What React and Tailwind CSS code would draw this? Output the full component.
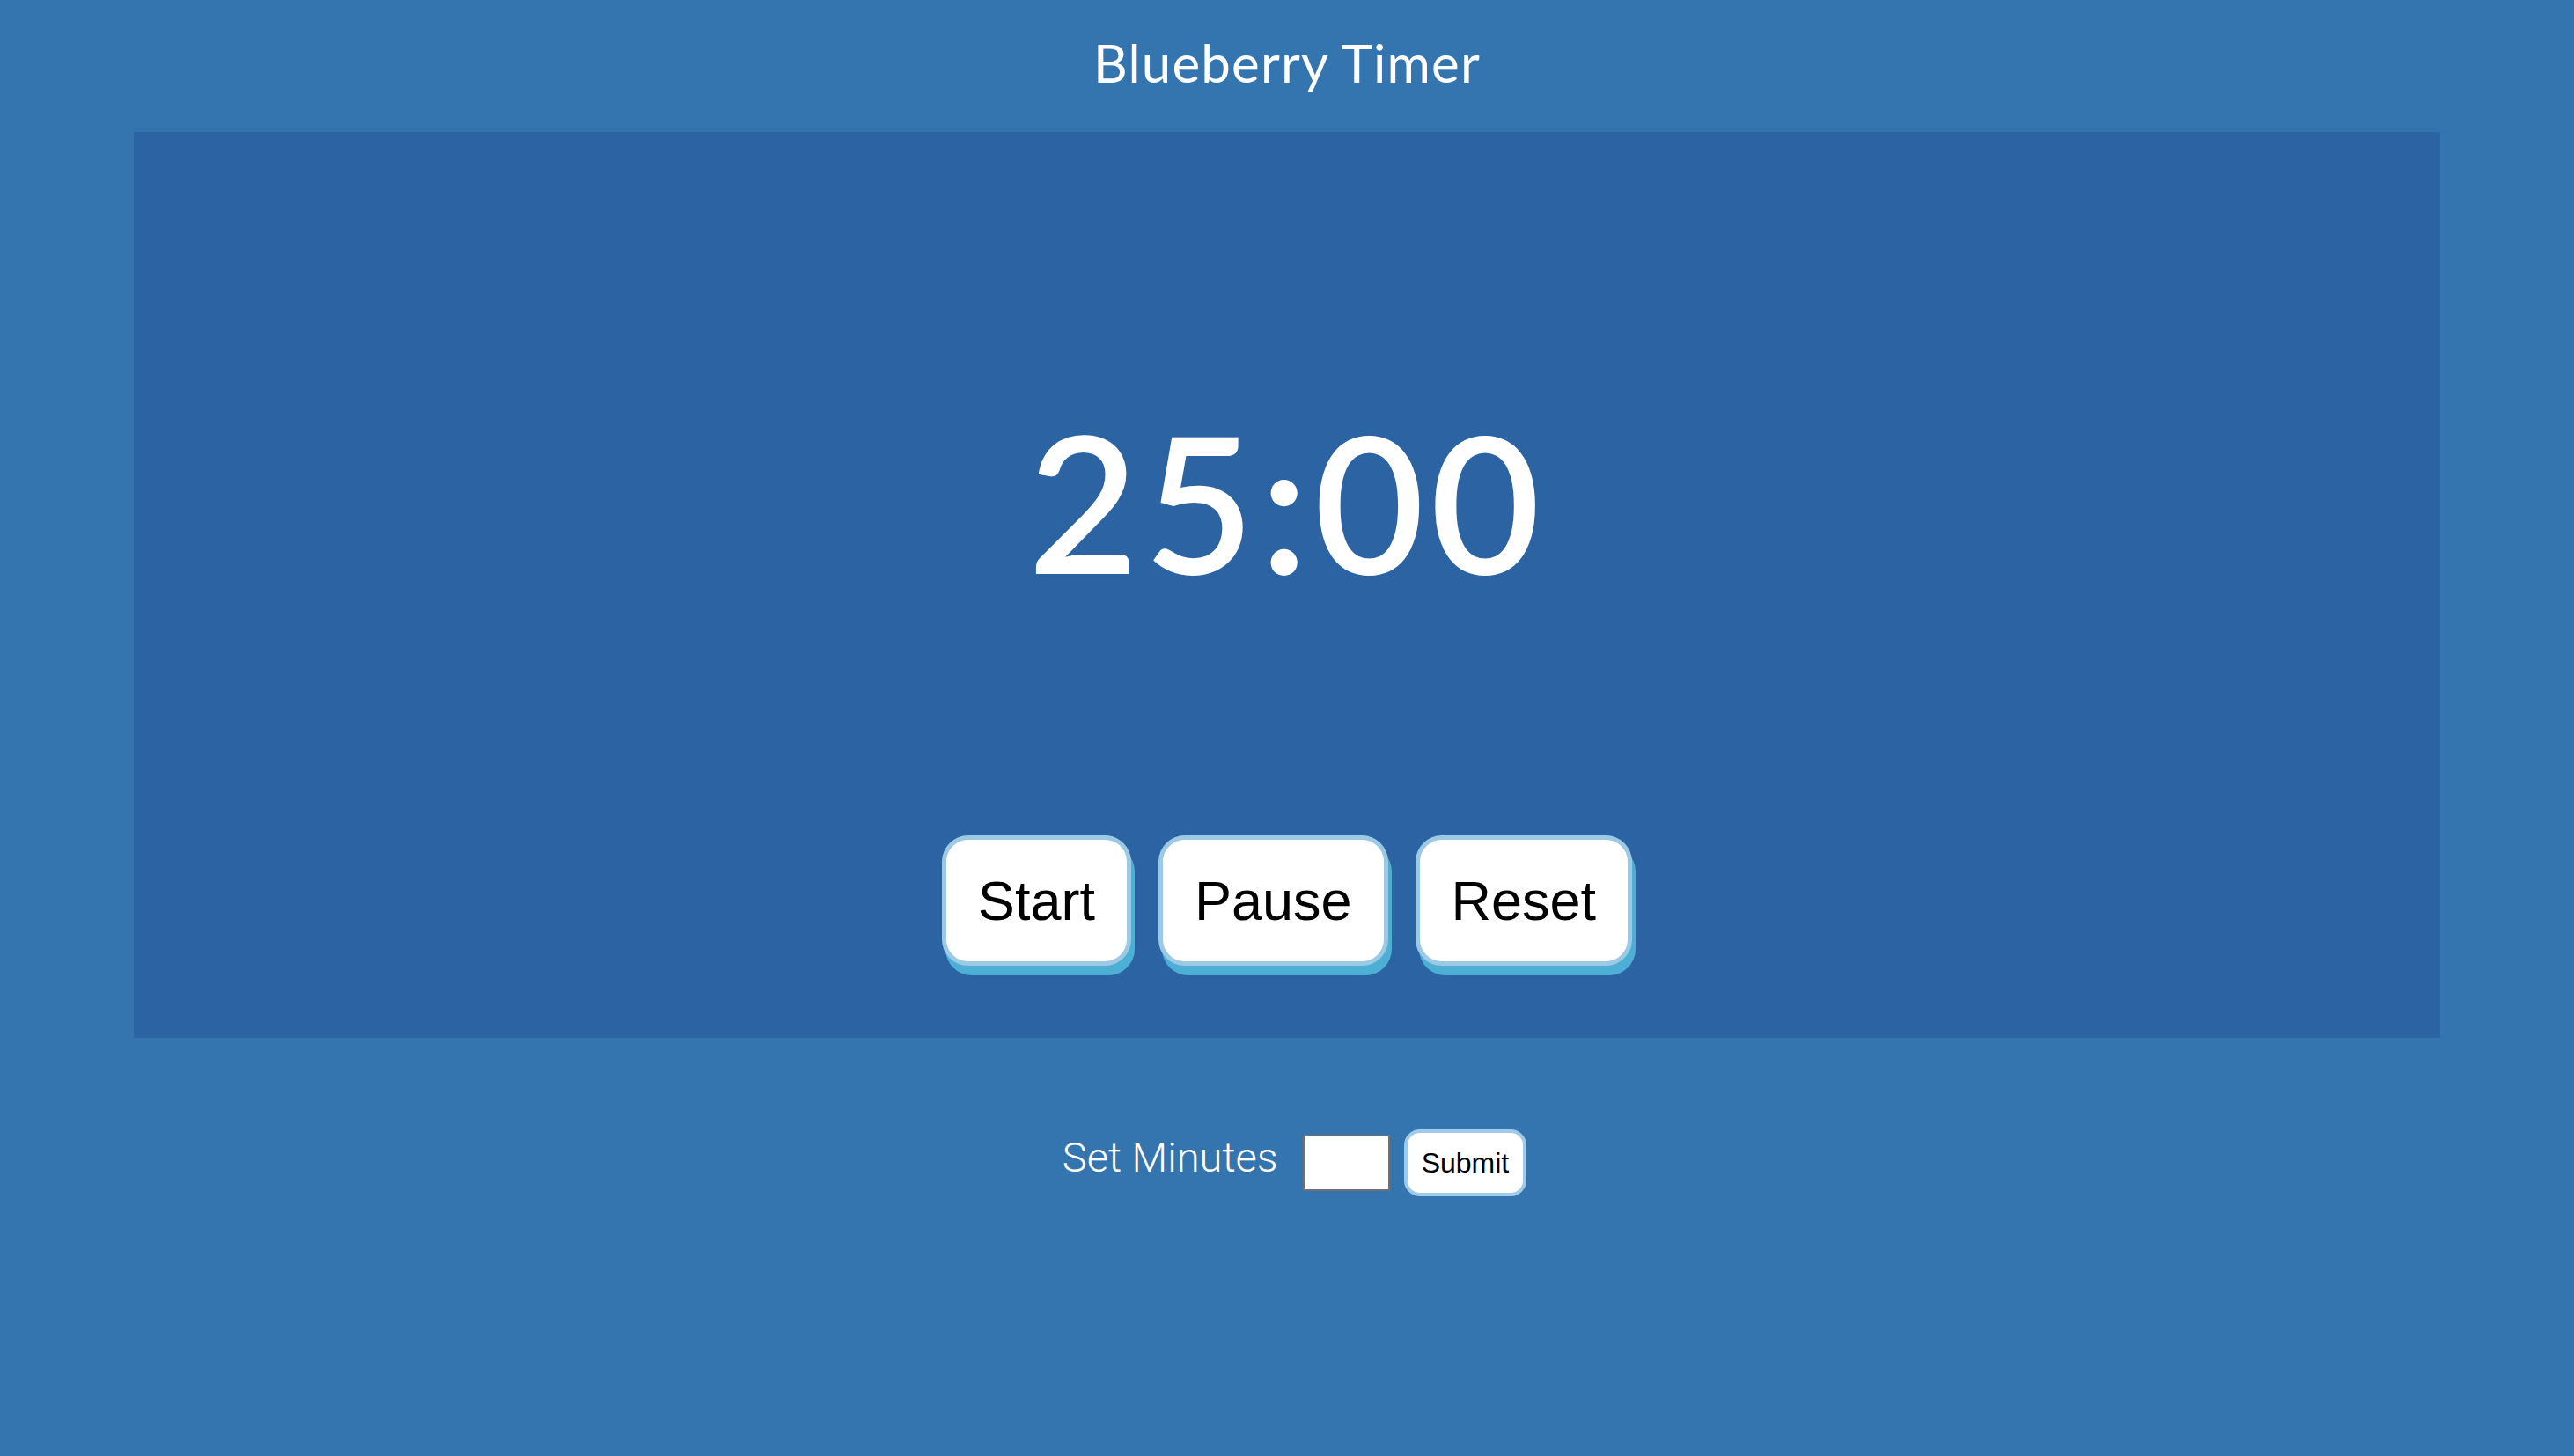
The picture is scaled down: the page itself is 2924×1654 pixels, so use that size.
import { useState } from 'react';

const buttons = ['Start', 'Pause', 'Reset'];

export default function App() {
  const [minutes, setMinutes] = useState('');

  return (
    <div className="min-h-[1654px] bg-[#3475b0] text-white">
      <header className="h-[150px] pt-[41px] flex justify-center">
        <h1 className="font-['Comic_Sans_MS','Lato',sans-serif] text-[60px] leading-none font-normal tracking-[0.02em]">
          Blueberry Timer
        </h1>
      </header>

      <main className="mx-[152px] h-[1029px] bg-[#2b63a3] flex flex-col items-center pt-[311px]">
        <div className="font-['Comic_Sans_MS','Lato',sans-serif] font-semibold text-[216px] leading-none tracking-[0.03em]">
          25:00
        </div>

        <div className="mt-[272px] flex gap-[31px]">
          {buttons.map((label) => (
            <button
              key={label}
              className="h-[148px] px-[36px] bg-white text-black border-[5px] border-[#9ccae5] rounded-[30px] shadow-[4px_11px_0_#4eafd6] font-['Liberation_Sans',Arial,sans-serif] text-[63px] leading-none"
            >
              {label}
            </button>
          ))}
        </div>
      </main>

      <div className="mt-[104px] flex items-center justify-center pl-[17px]">
        <label className="font-['Roboto',sans-serif] font-light text-[47px] leading-none mb-[13px] mr-[28px]">
          Set Minutes
        </label>
        <input
          type="text"
          value={minutes}
          onChange={(e) => setMinutes(e.target.value)}
          className="w-[99px] h-[64px] bg-white text-black border-2 border-[#707070] rounded-[2px] mr-[16px] outline-none"
        />
        <button className="h-[76px] px-[16px] bg-white text-black border-4 border-[#9fcbe8] rounded-[18px] font-['Liberation_Sans',Arial,sans-serif] text-[32px] leading-none">
          Submit
        </button>
      </div>
    </div>
  );
}
